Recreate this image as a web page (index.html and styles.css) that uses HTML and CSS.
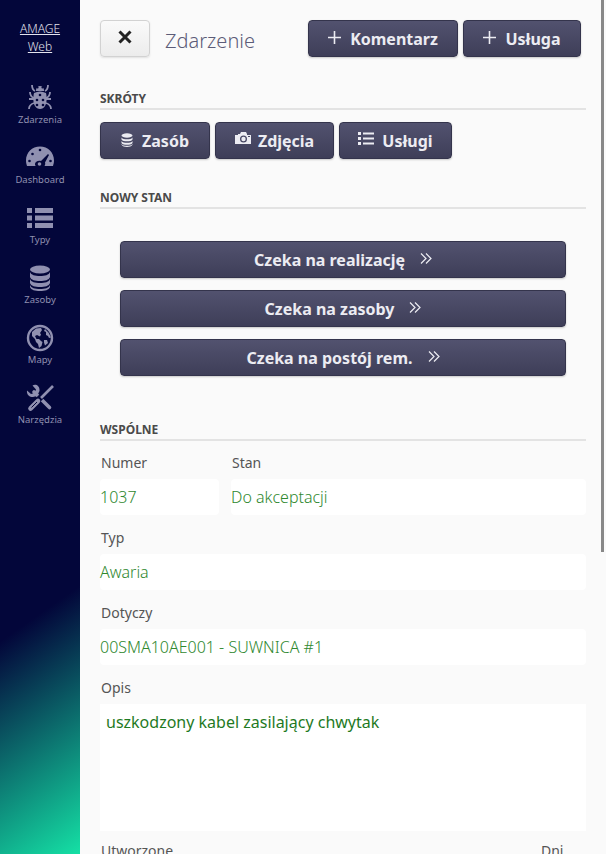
FILE: index.html
```html
<!DOCTYPE html>
<html lang="pl">
<head>
<meta charset="utf-8">
<title>Zdarzenie</title>
<link rel="stylesheet" href="styles.css">
</head>
<body>
<div class="app">
  <nav class="side">
    <div class="brand"><a>AMAGE</a><a>Web</a></div>
    <a class="nav-item">
      <svg class="nav-icon" viewBox="0 0 28 28"><path d="M6 1c0 3 1 5 3 6M22 1c0 3-1 5-3 6M4 8c0 3 1 5 4 6M24 8c0 3-1 5-4 6M3 15h5M25 15h-5M3 25c0-4 2-5 5-6M25 25c0-4-2-5-5-6" fill="none" stroke="currentColor" stroke-width="1.8"/><path d="M10 6c0-2 2-4 4-4s4 2 4 4v1h-8z"/><path d="M8 9c2-1 4-1.500 6-1.500s4 .5 6 1.500c1 4 1 10-1 13-1 2-3 3-5 3s-4-1-5-3c-2-3-2-9-1-13z"/><circle cx="11.500" cy="3.500" r="1.100" class="cut"/><circle cx="16.500" cy="3.500" r="1.100" class="cut"/><circle cx="14" cy="11" r="1.300" class="cut"/><circle cx="11" cy="16" r="1.300" class="cut"/><circle cx="17" cy="16" r="1.300" class="cut"/><circle cx="11" cy="21" r="1.300" class="cut"/><circle cx="17" cy="21" r="1.300" class="cut"/></svg>
      <span>Zdarzenia</span>
    </a>
    <a class="nav-item">
      <svg class="nav-icon" viewBox="0 0 28 28"><path d="M1 22C.4 20 0 18.500 0 16.500 0 8.500 6 2.500 14 2.500s14 6 14 14c0 2-.4 3.500-1 5.500h-8.500c.6-1 1-2 .5-3.500L23 11l-1-1-7 7c-3-1-6 1-6 3 0 1 .3 1.500.7 2z"/><circle cx="13.500" cy="20" r="1.800"/><circle cx="14" cy="6" r="1.300" class="cut"/><circle cx="6.500" cy="10" r="1.300" class="cut"/><circle cx="3.500" cy="17" r="1.300" class="cut"/><circle cx="24.500" cy="17" r="1.300" class="cut"/></svg>
      <span>Dashboard</span>
    </a>
    <a class="nav-item">
      <svg class="nav-icon" viewBox="0 0 28 28"><path d="M1 4h5v5H1zM9 4h18v5H9zM1 11.500h5v5H1zM9 11.500h18v5H9zM1 19h5v5H1zM9 19h18v5H9z"/></svg>
      <span>Typy</span>
    </a>
    <a class="nav-item">
      <svg class="nav-icon" viewBox="0 0 28 28"><ellipse cx="14" cy="5.500" rx="10" ry="4"/><path d="M4 8c1 3 5 4 10 4s9-1 10-4v5c-1 3-5 4-10 4s-9-1-10-4zM4 15c1 3 5 4 10 4s9-1 10-4v4c-1 3-5 4-10 4s-9-1-10-4zM4 21c1 3 5 4 10 4s9-1 10-4v2c-1 3-5 4-10 4s-9-1-10-4z"/></svg>
      <span>Zasoby</span>
    </a>
    <a class="nav-item">
      <svg class="nav-icon" viewBox="0 0 28 28"><circle cx="14" cy="14" r="12" fill="none" stroke="currentColor" stroke-width="2.400"/><path d="M6 8l4-3.500 5-.5 1 2-2 3 1 1.500-1 2-3-1.500-2 1 1.500 3 2.500 0 2 2 1.500 1-1 4-2.500 2-1-4-2-2-1-3-3-3zM19 5l3.500 3.500 2.500 5-2 .5-1-2-2-1 0-3-2-1zM18 16l3 0 1 3-3 2.500-1-3z"/></svg>
      <span>Mapy</span>
    </a>
    <a class="nav-item">
      <svg class="nav-icon" viewBox="0 0 28 28"><path d="M8 8L23.500 23.500" fill="none" stroke="currentColor" stroke-width="3.600" stroke-linecap="round"/><path d="M1 6.500L5 10l3.500-1L10 5.500 6.500 1.500C10-.5 14 2 13.500 7L11 12 7 13C3 13 .5 10 1 6.500z"/><path d="M19 9L11 17" fill="none" class="gap" stroke-width="6"/><path d="M27 2L15 14" fill="none" stroke="currentColor" stroke-width="2.600"/><path d="M12 17L4.500 24.500" fill="none" stroke="currentColor" stroke-width="4.600" stroke-linecap="round"/><path d="M11 18L5.500 23.500" fill="none" class="gap" stroke-width="1"/></svg>
      <span>Narzędzia</span>
    </a>
  </nav>
  <main class="main">
    <header class="top">
      <button class="btn-close"><svg viewBox="0 0 14 14" class="x-icon"><path d="M1.500 1.500l11 11M12.500 1.500l-11 11"/></svg></button>
      <h1 class="title">Zdarzenie</h1>
      <div class="top-actions">
        <button class="btn btn-comment"><svg class="plus" viewBox="0 0 13 13"><path d="M6.500 0v13M0 6.500h13"/></svg>Komentarz</button>
        <button class="btn btn-service"><svg class="plus" viewBox="0 0 13 13"><path d="M6.500 0v13M0 6.500h13"/></svg>Usługa</button>
      </div>
    </header>

    <h2 class="section section-first">SKRÓTY</h2>
    <div class="shortcuts">
      <button class="btn btn-res"><svg class="ico" viewBox="0 0 12 14"><ellipse cx="6" cy="2.500" rx="5.500" ry="2.200"/><path d="M.5 4.500C1.500 6 3.500 6.300 6 6.300s4.500-.3 5.500-1.800v2C10.500 8 8.500 8.300 6 8.300S1.500 8 .5 6.500zM.5 8C1.500 9.500 3.500 9.800 6 9.800s4.500-.3 5.500-1.800v2C10.500 11.500 8.500 11.800 6 11.800S1.500 11.500.5 10zM.5 11C1.500 12.500 3.500 12.800 6 12.800s4.500-.3 5.500-1.800v.8C10.500 13.400 8.500 14 6 14s-4.500-.6-5.500-2.200z"/></svg>Zasób</button>
      <button class="btn btn-photo"><svg class="ico ico-cam" viewBox="0 0 16 13"><path fill-rule="evenodd" d="M0 3h3V2h2l1-2h5l1 2v1h4v9H0zM8.500 3.500a3.500 3.500 0 1 0 0 7 3.500 3.500 0 0 0 0-7zm0 1.300a2.200 2.200 0 1 1 0 4.400 2.200 2.200 0 0 1 0-4.400zM13 4h2v1h-2z"/></svg>Zdjęcia</button>
      <button class="btn btn-list"><svg class="ico ico-list" viewBox="0 0 16 13"><path d="M0 0h3v3H0zM5 .5h11v2H5zM0 5h3v3H0zM5 5.500h11v2H5zM0 10h3v3H0zM5 10.500h11v2H5z"/></svg>Usługi</button>
    </div>

    <h2 class="section section-state">NOWY STAN</h2>
    <div class="states">
      <button class="btn btn-state">Czeka na realizację<svg class="chev" viewBox="0 0 12 11"><path d="M1 .5L6 5.500 1 10.500M6 .5L11 5.500 6 10.500"/></svg></button>
      <button class="btn btn-state">Czeka na zasoby<svg class="chev" viewBox="0 0 12 11"><path d="M1 .5L6 5.500 1 10.500M6 .5L11 5.500 6 10.500"/></svg></button>
      <button class="btn btn-state">Czeka na postój rem.<svg class="chev" viewBox="0 0 12 11"><path d="M1 .5L6 5.500 1 10.500M6 .5L11 5.500 6 10.500"/></svg></button>
    </div>

    <h2 class="section section-common">WSPÓLNE</h2>
    <div class="row">
      <div class="field field-num"><label>Numer</label><div class="value">1037</div></div>
      <div class="field field-grow"><label>Stan</label><div class="value">Do akceptacji</div></div>
    </div>
    <div class="field"><label>Typ</label><div class="value">Awaria</div></div>
    <div class="field"><label>Dotyczy</label><div class="value">00SMA10AE001 - SUWNICA #1</div></div>
    <div class="field"><label>Opis</label><div class="area">uszkodzony kabel zasilający chwytak</div></div>
    <div class="row">
      <div class="field field-grow"><label>Utworzone</label></div>
      <div class="field field-days"><label>Dni</label></div>
    </div>
  </main>
  <div class="scrollbar"></div>
</div>
</body>
</html>
```
FILE: styles.css
```css
* { box-sizing: border-box; }
html, body { margin: 0; height: 100%; overflow: hidden; }
body { font-family: "Noto Sans", "Open Sans", sans-serif; background: #fafafa; color: #555; }
.app { position: relative; display: flex; height: 854px; overflow: hidden; }

.side {
  width: 80px; flex: none; height: 854px;
  background: linear-gradient(145deg, #03063a 70.500%, #15e0a5 100%);
  display: flex; flex-direction: column; align-items: center;
  padding-top: 20px;
}
.brand { display: flex; flex-direction: column; align-items: center; font-size: 12px; line-height: 18px; font-weight: 300; color: #e4e4ee; margin-bottom: 28px; }
.brand a { text-decoration: underline; }
.nav-item { height: 60px; display: flex; flex-direction: column; align-items: center; color: #9090b0; font-size: 9.500px; line-height: 13px; }
.nav-icon { width: 28px; height: 28px; fill: currentColor; margin-bottom: 1px; display: block; }
.nav-icon .cut { fill: #03063a; }
.nav-icon .gap { stroke: #03063a; }

.main { flex: 1; min-width: 0; padding: 20px 20px 0; }
.top { display: flex; align-items: flex-start; height: 37px; }
.btn-close {
  width: 50px; height: 37px; padding: 0; border: 1px solid #d2d2d2; border-radius: 4px;
  background: linear-gradient(#fafafa, #ececec); box-shadow: 0 1px 2px rgba(0,0,0,.1);
  display: flex; align-items: center; justify-content: center; padding-bottom: 3px;
}
.x-icon { width: 14px; height: 14px; fill: none; stroke: #222; stroke-width: 3px; }
.title { margin: 7px 0 0 15px; font-size: 20px; line-height: 27px; font-weight: 300; color: #5c5c78; }
.top-actions { margin-left: auto; margin-right: 5px; display: flex; gap: 5px; }

.btn {
  height: 37px; padding: 0; border: 1px solid #34344c; border-radius: 4px;
  background: linear-gradient(#52526f, #3e3e58);
  box-shadow: 0 1px 2px rgba(0,0,0,.2);
  color: #ececf2; font: 700 16px/22px "Noto Sans", "Open Sans", sans-serif;
  display: flex; align-items: center; justify-content: center;
}
.btn-comment { width: 150px; }
.btn-service { width: 118px; }
.plus { width: 13px; height: 13px; margin-right: 9px; fill: none; stroke: currentColor; stroke-width: 1.600px; position: relative; top: -1px; }

.section { margin: 0; font-size: 12px; line-height: 16px; font-weight: 700; color: #4a4a4a; border-bottom: 2px solid #e3e3e3; padding-bottom: 1px; }
.section-first { margin-top: 34px; }
.section-state { margin-top: 31px; }
.section-common { margin-top: 46px; }

.shortcuts { display: flex; gap: 5px; margin-top: 12px; }
.btn-res { width: 110px; }
.btn-photo { width: 119px; }
.btn-list { width: 113px; }
.ico { width: 12px; height: 14px; fill: currentColor; margin-right: 9px; position: relative; top: -1px; }
.ico-cam { width: 16px; height: 13px; margin-right: 7px; top: -2px; }
.ico-list { width: 16px; height: 13px; margin-right: 8px; top: -2px; }

.states { display: flex; flex-direction: column; gap: 12px; margin: 32px 20px 0; }
.btn-state { width: 100%; }
.chev { width: 12px; height: 11px; margin-left: 15px; fill: none; stroke: currentColor; stroke-width: 1.200px; position: relative; top: -1px; }

.row { display: flex; gap: 12px; }
.field { display: block; }
.field-num { width: 119px; flex: none; }
.field-grow { flex: 1; }
.field-days { width: 46px; flex: none; }
label { display: block; font-size: 14px; line-height: 19px; margin: 0 0 7px 1px; color: #555; }
.value { height: 36px; margin-bottom: 13px; background: #fff; border-radius: 4px; font-size: 16px; line-height: 36px; color: #2f882f; font-weight: 300; }
.section-common + .row { margin-top: 12px; }
.area { height: 127px; margin-bottom: 10px; background: #fff; font-size: 16px; line-height: 22px; padding: 7px 6px; color: #1f7a1f; }
.scrollbar { position: absolute; top: 0; right: 2px; width: 3px; height: 552px; background: #888; }
```
